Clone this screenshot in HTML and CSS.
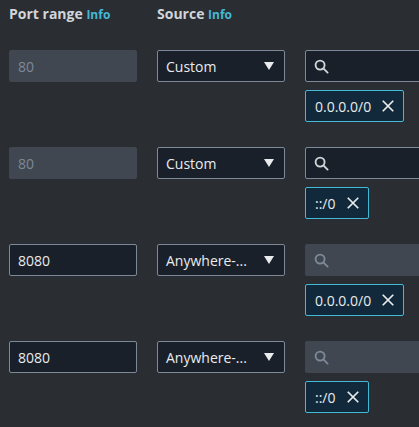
FILE: index.html
```html
<!DOCTYPE html>
<html lang="en">
<head>
<meta charset="utf-8">
<title>Inbound rules</title>
<link rel="stylesheet" href="styles.css">
</head>
<body>
<div class="rules">
  <div class="header">
    <div class="label">Port range <span class="info">Info</span></div>
    <div class="label">Source <span class="info">Info</span></div>
  </div>

  <div class="rule">
    <div class="field disabled">80</div>
    <div class="field select"><span class="sel-text">Custom</span><span class="caret"></span></div>
    <div class="source">
      <div class="field search"><svg class="icon" viewBox="0 0 16 16"><circle cx="6.5" cy="6.5" r="4.8"/><path d="M10 10l4.5 4.5"/></svg></div>
      <div class="token"><span>0.0.0.0/0</span><svg class="x" viewBox="0 0 16 16"><path d="M2 2l12 12M14 2L2 14"/></svg></div>
    </div>
  </div>

  <div class="rule">
    <div class="field disabled">80</div>
    <div class="field select"><span class="sel-text">Custom</span><span class="caret"></span></div>
    <div class="source">
      <div class="field search"><svg class="icon" viewBox="0 0 16 16"><circle cx="6.5" cy="6.5" r="4.8"/><path d="M10 10l4.5 4.5"/></svg></div>
      <div class="token"><span>::/0</span><svg class="x" viewBox="0 0 16 16"><path d="M2 2l12 12M14 2L2 14"/></svg></div>
    </div>
  </div>

  <div class="rule">
    <div class="field">8080</div>
    <div class="field select"><span class="sel-text">Anywhere-...</span><span class="caret"></span></div>
    <div class="source">
      <div class="field search off"><svg class="icon" viewBox="0 0 16 16"><circle cx="6.5" cy="6.5" r="4.8"/><path d="M10 10l4.5 4.5"/></svg></div>
      <div class="token"><span>0.0.0.0/0</span><svg class="x" viewBox="0 0 16 16"><path d="M2 2l12 12M14 2L2 14"/></svg></div>
    </div>
  </div>

  <div class="rule">
    <div class="field">8080</div>
    <div class="field select"><span class="sel-text">Anywhere-...</span><span class="caret"></span></div>
    <div class="source">
      <div class="field search off"><svg class="icon" viewBox="0 0 16 16"><circle cx="6.5" cy="6.5" r="4.8"/><path d="M10 10l4.5 4.5"/></svg></div>
      <div class="token"><span>::/0</span><svg class="x" viewBox="0 0 16 16"><path d="M2 2l12 12M14 2L2 14"/></svg></div>
    </div>
  </div>
</div>
</body>
</html>
```

FILE: styles.css
```css
html, body {
  margin: 0;
  padding: 0;
  background: #2a2e33;
  overflow: hidden;
}

body {
  font-family: "Open Sans", "Noto Sans", sans-serif;
  font-size: 14px;
  color: #d1d5db;
}

.rules {
  padding: 3px 0 0 9px;
  display: flex;
  flex-direction: column;
  gap: 25px;
  width: 600px;
}

.header {
  display: grid;
  grid-template-columns: 128px 1fr;
  column-gap: 20px;
  line-height: 22px;
  margin-bottom: -1px;
}

.label {
  font-weight: 700;
  font-size: 14px;
  color: #d1d5db;
  white-space: nowrap;
}

.info {
  font-size: 12px;
  color: #44b9d6;
}

.rule {
  display: grid;
  grid-template-columns: 128px 128px 220px;
  column-gap: 20px;
  align-items: start;
}

.field {
  box-sizing: border-box;
  height: 32px;
  border: 1px solid #7d8998;
  border-radius: 2px;
  background: #19202a;
  padding: 0 8px;
  display: flex;
  align-items: center;
  color: #e9ebed;
  white-space: nowrap;
}

.field.disabled {
  background: #414750;
  border-color: #414750;
  color: #7d8998;
}

.select {
  justify-content: space-between;
  padding-right: 10px;
}

.caret {
  width: 0;
  height: 0;
  border-left: 5.5px solid transparent;
  border-right: 5.5px solid transparent;
  border-top: 8px solid #e9ebed;
}

.source {
  display: flex;
  flex-direction: column;
  align-items: flex-start;
  gap: 8px;
}

.search {
  width: 100%;
}

.search.off {
  background: #414750;
  border-color: #414750;
}

.icon {
  width: 15px;
  height: 15px;
  fill: none;
  stroke: #d1d5db;
  stroke-width: 2;
  stroke-linecap: round;
}

.search.off .icon {
  stroke: #7d8998;
}

.token {
  box-sizing: border-box;
  height: 32px;
  display: flex;
  align-items: center;
  gap: 10px;
  padding: 0 8px 0 9px;
  border: 1px solid #44b9d6;
  border-radius: 2px;
  background: #12293b;
  color: #e9ebed;
}

.x {
  width: 14px;
  height: 14px;
  fill: none;
  stroke: #e9ebed;
  stroke-width: 2;
}
```
